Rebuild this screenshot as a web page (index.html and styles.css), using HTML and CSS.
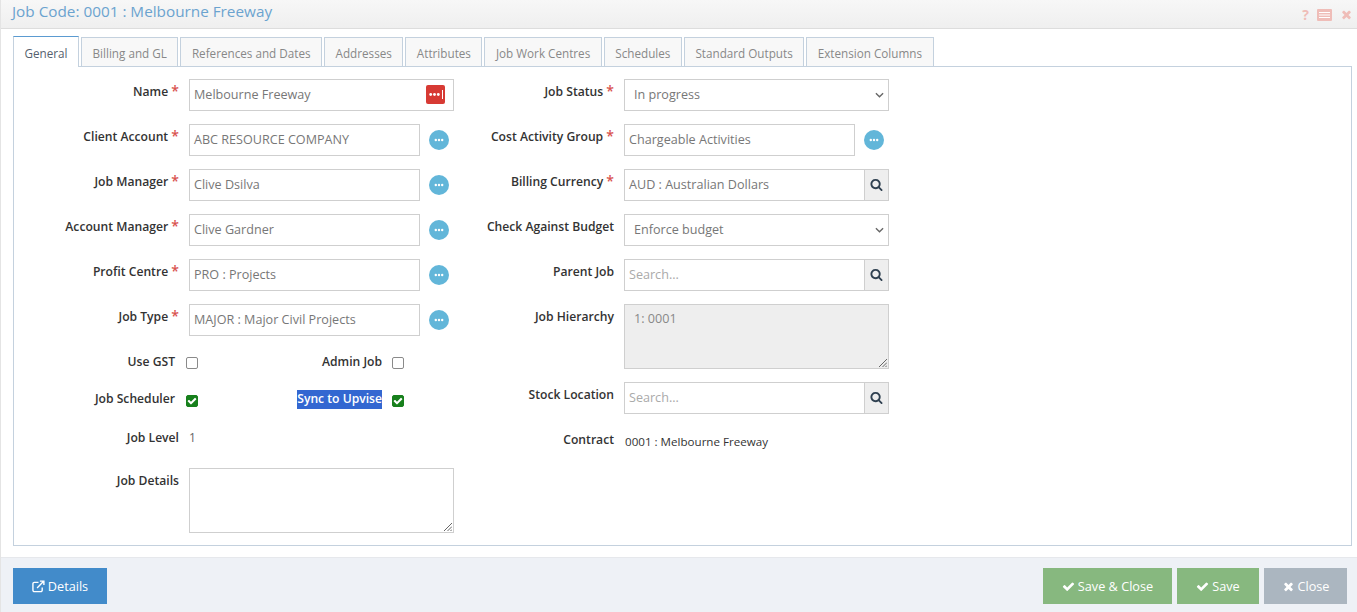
FILE: index.html
```html
<!DOCTYPE html>
<html lang="en">
<head>
<meta charset="utf-8">
<title>Job Code</title>
<link rel="stylesheet" href="styles.css">
</head>
<body>
<svg class="defs" aria-hidden="true">
  <symbol id="i-check" viewBox="0 0 1792 1792"><path d="M1671 566q0 40-28 68l-724 724-136 136q-28 28-68 28t-68-28l-136-136-362-362q-28-28-28-68t28-68l136-136q28-28 68-28t68 28l294 295 656-657q28-28 68-28t68 28l136 136q28 28 28 68z"/></symbol>
  <symbol id="i-times" viewBox="0 0 1792 1792"><path d="M1490 1322q0 40-28 68l-136 136q-28 28-68 28t-68-28l-294-294-294 294q-28 28-68 28t-68-28l-136-136q-28-28-28-68t28-68l294-294-294-294q-28-28-28-68t28-68l136-136q28-28 68-28t68 28l294 294 294-294q28-28 68-28t68 28l136 136q28 28 28 68t-28 68l-294 294 294 294q28 28 28 68z"/></symbol>
  <symbol id="i-search" viewBox="0 0 1792 1792"><path d="M1216 832q0-185-131.500-316.500t-316.500-131.500-316.500 131.500-131.500 316.500 131.500 316.500 316.500 131.500 316.500-131.500 131.500-316.500zm512 832q0 52-38 90t-90 38q-54 0-90-38l-343-342q-179 124-399 124-143 0-273.500-55.500t-225-150-150-225-55.500-273.500 55.500-273.500 150-225 225-150 273.500-55.500 273.500 55.500 225 150 150 225 55.500 273.500q0 220-124 399l343 343q37 37 37 90z"/></symbol>
  <symbol id="i-dots" viewBox="0 0 20 20"><circle cx="6" cy="10" r="1.500"/><circle cx="10" cy="10" r="1.500"/><circle cx="14" cy="10" r="1.500"/></symbol>
</svg>

<header class="title-bar">
  <h1 class="title">Job Code: 0001 : Melbourne Freeway</h1>
  <div class="window-tools">
    <span class="tool-help">?</span>
    <svg class="tool-table" viewBox="0 0 15 12"><rect width="15" height="12" rx="1"/><path d="M2 3.500h11M2 6h11M2 8.500h11" /></svg>
    <svg class="tool-close"><use href="#i-times"/></svg>
  </div>
</header>

<main class="content">
  <nav class="tabs">
    <a class="tab active">General</a>
    <a class="tab">Billing and GL</a>
    <a class="tab">References and Dates</a>
    <a class="tab">Addresses</a>
    <a class="tab">Attributes</a>
    <a class="tab">Job Work Centres</a>
    <a class="tab">Schedules</a>
    <a class="tab">Standard Outputs</a>
    <a class="tab">Extension Columns</a>
  </nav>
  <section class="panel">
    <div class="col col-left">
      <div class="row">
        <label class="lbl">Name <b>*</b></label>
        <div class="box box-wide name-box"><span>Melbourne Freeway</span>
          <span class="red-btn"><svg><use href="#i-dots"/></svg><i></i></span>
        </div>
      </div>
      <div class="row"><label class="lbl">Client Account <b>*</b></label><div class="box">ABC RESOURCE COMPANY</div><span class="dot-btn"><svg><use href="#i-dots"/></svg></span></div>
      <div class="row"><label class="lbl">Job Manager <b>*</b></label><div class="box">Clive Dsilva</div><span class="dot-btn"><svg><use href="#i-dots"/></svg></span></div>
      <div class="row"><label class="lbl">Account Manager <b>*</b></label><div class="box">Clive Gardner</div><span class="dot-btn"><svg><use href="#i-dots"/></svg></span></div>
      <div class="row"><label class="lbl">Profit Centre <b>*</b></label><div class="box">PRO : Projects</div><span class="dot-btn"><svg><use href="#i-dots"/></svg></span></div>
      <div class="row"><label class="lbl">Job Type <b>*</b></label><div class="box">MAJOR : Major Civil Projects</div><span class="dot-btn"><svg><use href="#i-dots"/></svg></span></div>

      <div class="check-row check-row-first">
        <div class="check-item"><span class="check-lbl">Use GST</span><span class="cb"></span></div>
        <div class="check-item check-item-2"><span class="check-lbl">Admin Job</span><span class="cb"></span></div>
      </div>
      <div class="check-row check-row-second">
        <div class="check-item"><span class="check-lbl">Job Scheduler</span><span class="cb on"><svg><use href="#i-check"/></svg></span></div>
        <div class="check-item check-item-2"><span class="check-lbl"><span class="selected">Sync to Upvise</span></span><span class="cb on"><svg><use href="#i-check"/></svg></span></div>
      </div>
      <div class="row level-row"><label class="lbl">Job Level</label><span class="static level">1</span></div>
      <div class="row details-row"><label class="lbl">Job Details</label><div class="area"><svg class="grip" viewBox="0 0 8 8"><path d="M8 0L0 8M8 3.500L3.500 8M8 6.500L6.500 8"/></svg></div></div>
    </div>

    <div class="col col-right">
      <div class="row"><label class="lbl">Job Status <b>*</b></label><div class="box box-wide select">In progress<svg class="chev" viewBox="0 0 10 6"><path d="M1 1l4 4 4-4"/></svg></div></div>
      <div class="row"><label class="lbl">Cost Activity Group <b>*</b></label><div class="box box-mid">Chargeable Activities</div><span class="dot-btn"><svg><use href="#i-dots"/></svg></span></div>
      <div class="row"><label class="lbl">Billing Currency <b>*</b></label><div class="box box-wide lookup"><span class="lookup-text">AUD : Australian Dollars</span><span class="addon"><svg><use href="#i-search"/></svg></span></div></div>
      <div class="row"><label class="lbl">Check Against Budget</label><div class="box box-wide select">Enforce budget<svg class="chev" viewBox="0 0 10 6"><path d="M1 1l4 4 4-4"/></svg></div></div>
      <div class="row"><label class="lbl">Parent Job</label><div class="box box-wide lookup"><span class="lookup-text ph">Search...</span><span class="addon"><svg><use href="#i-search"/></svg></span></div></div>
      <div class="row hierarchy-row"><label class="lbl">Job Hierarchy</label><div class="area area-disabled">1: 0001<svg class="grip" viewBox="0 0 8 8"><path d="M8 0L0 8M8 3.500L3.500 8M8 6.500L6.500 8"/></svg></div></div>
      <div class="row stock-row"><label class="lbl">Stock Location</label><div class="box box-wide lookup"><span class="lookup-text ph">Search...</span><span class="addon"><svg><use href="#i-search"/></svg></span></div></div>
      <div class="row contract-row"><label class="lbl">Contract</label><span class="static contract">0001 : Melbourne Freeway</span></div>
    </div>
  </section>
</main>

<footer class="footer">
  <a class="btn btn-blue">
    <svg class="ico-ext" viewBox="0 0 14 14"><path class="ext-box" d="M11 8v3a1.500 1.500 0 0 1-1.500 1.500h-7A1.500 1.500 0 0 1 1 11V4a1.500 1.500 0 0 1 1.500-1.500H7"/><path class="ext-arrow" d="M5.500 8.500L12 2M8.500 1.200h4.300v4.300"/></svg>Details</a>
  <div class="footer-right">
    <a class="btn btn-green btn-save-close"><svg class="ico"><use href="#i-check"/></svg>Save &amp; Close</a>
    <a class="btn btn-green btn-save"><svg class="ico"><use href="#i-check"/></svg>Save</a>
    <a class="btn btn-grey btn-close"><svg class="ico"><use href="#i-times"/></svg>Close</a>
  </div>
</footer>
</body>
</html>
```

FILE: styles.css
```css
* { box-sizing: border-box; }
html, body { height: 100%; }
body {
  margin: 0;
  width: 1357px;
  height: 612px;
  overflow: hidden;
  display: flex;
  flex-direction: column;
  font-family: "Open Sans", sans-serif;
  font-size: 12.600px;
  color: #333;
  background: #fff;
  border-left: 1px solid #e4e4e4;
}
.defs { display: none; }

.title-bar {
  height: 29px;
  flex: none;
  display: flex;
  align-items: center;
  justify-content: space-between;
  padding: 0 4px 7px 11px;
  background: linear-gradient(#f7f7f7, #efefef);
  border-bottom: 1px solid #ddd;
}
.title { margin: 0; font-size: 15.300px; font-weight: 400; color: #6ba3cf; line-height: 20px; }
.window-tools { display: flex; align-items: center; gap: 8px; margin-top: 8px; }
.tool-help { font-size: 14px; font-weight: 700; color: #efbdb8; line-height: 14px; }
.tool-table { width: 15px; height: 12px; }
.tool-table rect { fill: #efbdb8; }
.tool-table path { stroke: #fff; stroke-width: 1; fill: none; }
.tool-close { width: 13px; height: 13px; fill: #efbdb8; }

.content { flex: none; height: 529px; padding: 7px 5px 0 12px; border-bottom: 1px solid #e6e8ec; }
.tabs { display: flex; gap: 2px; height: 30px; align-items: flex-end; position: relative; z-index: 1; }
.tab {
  height: 29px;
  padding: 2px 10.500px 0;
  display: flex;
  align-items: center;
  font-size: 11.700px;
  color: #888;
  background: #f8f8f8;
  border: 1px solid #c4d1de;
  border-bottom: 0;
}
.tab.active {
  color: #555f6e;
  background: #fff;
  border-top-color: #5b9bd1;
  margin-bottom: -1px;
  height: 31px;
  padding-top: 1px;
}
.panel {
  height: 480px;
  display: flex;
  padding-top: 12px;
  border: 1px solid #c4d1de;
}
.col-left { width: 454px; flex: none; }
.col-right { width: 420px; flex: none; }

.row { display: flex; align-items: flex-start; height: 32px; margin-bottom: 13px; }
.lbl {
  flex: none;
  text-align: right;
  font-weight: 600;
  font-size: 12.150px;
  color: #333;
  line-height: 18px;
  padding-top: 4px;
  white-space: nowrap;
}
.col-left .lbl { width: 165px; }
.col-right .lbl { width: 146px; }
.lbl b { color: #d9534f; font-weight: 600; font-size: 14px; line-height: 0; }
.box {
  flex: none;
  margin-left: 10px;
  width: 231px;
  height: 32px;
  border: 1px solid #cfcfcf;
  padding: 0 4px 1px;
  display: flex;
  align-items: center;
  color: #777;
  font-size: 12.600px;
  background: #fff;
  white-space: nowrap;
}
.box-wide { width: 265px; }
.box-mid { width: 231px; }
.name-box { justify-content: space-between; padding-right: 8px; }
.red-btn {
  width: 19px; height: 19px; border-radius: 2px;
  background: #d73a34;
  display: flex; align-items: center; justify-content: center;
  position: relative;
  fill: #fff;
}
.red-btn svg { width: 19px; height: 19px; margin-left: -3px; }
.red-btn i { position: absolute; right: 2px; top: 5px; width: 1px; height: 9px; background: #fff; }
.dot-btn {
  flex: none;
  width: 20px; height: 20px; border-radius: 50%;
  margin: 6px 0 0 9px;
  background: #62b6d9;
  display: flex; align-items: center; justify-content: center;
  fill: #fff;
}
.dot-btn svg { width: 16px; height: 16px; }
.select { position: relative; padding-left: 9px; justify-content: space-between; padding-right: 4px; }
.chev { width: 9px; height: 6px; fill: none; stroke: #666; stroke-width: 1.500; }
.lookup { padding: 0 0 0 4px; }
.lookup-text { flex: 1; padding-bottom: 2px; }
.ph { color: #aaa; }
.addon {
  flex: none;
  width: 24px; height: 30px;
  padding-bottom: 2px;
  display: flex; align-items: center; justify-content: center;
  background: #eee;
  border-left: 1px solid #cfcfcf;
  fill: #2f4050;
}
.addon svg { width: 13px; height: 13px; }

.check-row { display: flex; height: 20px; }
.check-row-first { margin-top: 17px; }
.check-row-second { margin-top: 17px; }
.check-item { display: flex; align-items: flex-start; width: 185px; flex: none; }
.check-item-2 { width: 206px; }
.check-lbl {
  flex: none;
  text-align: right;
  font-weight: 600;
  font-size: 12.150px;
  line-height: 18px;
  white-space: nowrap;
}
.check-item:first-child .check-lbl { width: 161px; }
.check-item-2 .check-lbl { width: 183px; }
.selected { background: #3367d1; color: #fff; display: inline-block; height: 19px; }
.cb {
  flex: none;
  margin: 4px 0 0 11px;
  width: 12px; height: 12px;
  border: 1px solid #8a8a8a;
  border-radius: 2px;
  background: #fff;
}
.check-item-2 .cb { margin-left: 10px; }
.check-row-second .cb { margin-top: 5px; }
.cb.on {
  background: #17801c;
  border-color: #17801c;
  fill: #fff;
  display: flex; align-items: center; justify-content: center;
}
.cb.on svg { width: 10px; height: 10px; }

.level-row { margin-top: 15px; height: 18px; margin-bottom: 25px; }
.static { margin-left: 10px; color: #666; font-size: 12px; padding-top: 4px; line-height: 18px; }
.contract { color: #333; font-size: 11.600px; padding-top: 6px; margin-left: 11px; }
.details-row { height: 65px; margin-bottom: 0; }
.area {
  position: relative;
  margin-left: 10px;
  width: 265px;
  height: 65px;
  border: 1px solid #cfcfcf;
  background: #fff;
  flex: none;
}
.area-disabled { background: #eee; color: #888; font-size: 12.600px; padding: 5px 9px; line-height: 18px; }
.grip { position: absolute; right: 1px; bottom: 1px; width: 8px; height: 8px; stroke: #666; stroke-width: 1; fill: none; }
.hierarchy-row { height: 65px; margin-bottom: 13px; }
.stock-row { margin-bottom: 13px; }
.contract-row { margin-bottom: 0; }

.footer {
  flex: 1;
  background: #eef1f6;
  display: flex;
  justify-content: space-between;
  align-items: flex-start;
  padding: 10px 10px 0 12px;
}
.footer-right { display: flex; gap: 5px; }
.btn {
  height: 36px;
  display: flex;
  align-items: center;
  justify-content: center;
  color: #fff;
  font-size: 12.700px;
  gap: 3px;
}
.btn-blue { width: 94px; background: #428bca; }
.btn-green { background: #87b87f; }
.btn-grey { background: #abb6c0; }
.btn-save-close { width: 129px; }
.btn-save { width: 82px; }
.btn-close { width: 83px; }
.ico { width: 13px; height: 13px; fill: #fff; }
.ico-ext { width: 13px; height: 13px; fill: none; stroke: #fff; stroke-width: 1.500; }
```
